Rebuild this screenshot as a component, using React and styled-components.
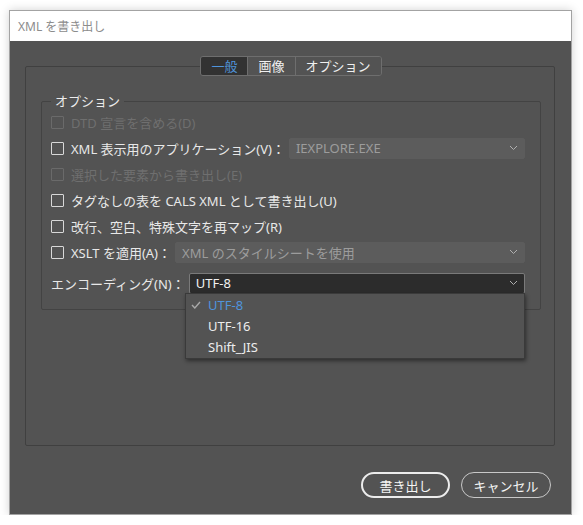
import React from 'react';
import styled, { createGlobalStyle } from 'styled-components';

const GlobalStyle = createGlobalStyle`
    body {
        margin: 0;
        background: #ffffff;
        font-family: "Noto Sans", "Noto Sans CJK JP", sans-serif;
    }
`;

const Window = styled.div`
    position: relative;
    margin: 10px 0 0 9px;
    width: 561px;
    height: 503px;
    border: 1px solid #a3a3a3;
    box-shadow: 0 0 9px rgba(0, 0, 0, 0.18);
    display: flex;
    flex-direction: column;
    background: #535353;
`;

const TitleBar = styled.div`
    height: 30px;
    background: #ffffff;
    display: flex;
    align-items: center;
    padding-left: 8px;
    font-size: 12px;
    color: #8c8c8c;
`;

const Body = styled.div`
    flex: 1;
    display: flex;
    flex-direction: column;
    padding: 15px 16px 16px 15px;
    color: #e6e6e6;
    font-size: 13px;
`;

const TabRow = styled.div`
    display: flex;
    justify-content: center;
    position: relative;
    z-index: 1;
    height: 20px;
    padding-left: 2px;
`;

const Tabs = styled.div`
    display: flex;
    border: 1px solid #6e6e6e;
    border-radius: 3px;
    overflow: hidden;
    background: #535353;
`;

const Tab = styled.div`
    padding: 0 10px;
    line-height: 18px;
    font-size: 13px;
    background: ${p => (p.$active ? '#323232' : '#535353')};
    color: ${p => (p.$active ? '#4f94dc' : '#f0f0f0')};
    border-left: ${p => (p.$first ? 'none' : '1px solid #6e6e6e')};
`;

const Frame = styled.div`
    margin-top: -10px;
    height: 380px;
    border: 1px solid #404040;
    border-radius: 2px;
    padding: 26px 13px 0 15px;
    box-sizing: border-box;
`;

const Group = styled.fieldset`
    margin: 0;
    border: 1px solid #434343;
    border-radius: 2px;
    padding: 0 15px 13px 9px;
    min-width: 0;
`;

const Legend = styled.legend`
    padding: 0 4px;
    font-size: 13px;
    color: #ececec;
    line-height: 16px;
`;

const Row = styled.div`
    display: flex;
    align-items: center;
    height: 26px;
    margin-top: ${p => p.$gap || 0}px;
    color: ${p => (p.$disabled ? '#6f6f6f' : '#e8e8e8')};
    white-space: nowrap;
    position: relative;
`;

const Check = styled.span`
    width: 11px;
    height: 11px;
    border: 1px solid ${p => (p.$disabled ? '#6a6a6a' : '#d8d8d8')};
    border-radius: 1px;
    margin-right: 7px;
    flex: none;
`;

const Label = styled.span`
    margin-right: 4px;
`;

const Select = styled.div`
    flex: 1;
    height: 21px;
    display: flex;
    align-items: center;
    justify-content: space-between;
    padding: 0 6px;
    border-radius: 2px;
    box-sizing: border-box;
    background: ${p => (p.$dark ? '#2c2c2c' : '#5c5c5c')};
    border: 1px solid ${p => (p.$dark ? '#7a7a7a' : '#5c5c5c')};
    color: ${p => (p.$dark ? '#f2f2f2' : '#9c9c9c')};
`;

const Menu = styled.div`
    position: absolute;
    top: 23px;
    left: 134px;
    right: 0;
    background: #535353;
    border: 1px solid #3a3a3a;
    box-shadow: 1px 2px 4px rgba(0, 0, 0, 0.45);
    padding: 0 0 1px;
`;

const MenuItem = styled.div`
    height: 21px;
    display: flex;
    align-items: center;
    padding-left: 22px;
    position: relative;
    color: ${p => (p.$selected ? '#4f94dc' : '#ededed')};
`;

const Tick = styled.svg`
    position: absolute;
    left: 5px;
    top: 7px;
`;

const Footer = styled.div`
    margin-top: auto;
    display: flex;
    justify-content: flex-end;
    gap: 11px;
    padding-right: 4px;
`;

const Button = styled.button`
    height: 26px;
    width: ${p => p.$w}px;
    border-radius: 13px;
    background: transparent;
    color: #f5f5f5;
    font-family: inherit;
    font-size: 13px;
    border: ${p => (p.$primary ? '2px solid #ececec' : '1px solid #c8c8c8')};
    padding: 0;
`;

const Chevron = () => (
    <svg width="9" height="6" viewBox="0 0 9 6">
        <path d="M1 1 L4.5 4.5 L8 1" fill="none" stroke="#b0b0b0" strokeWidth="1" />
    </svg>
);

export default function App() {
    return (
        <>
            <GlobalStyle />
            <Window>
                <TitleBar>XML を書き出し</TitleBar>
                <Body>
                    <TabRow>
                        <Tabs>
                            <Tab $active $first>一般</Tab>
                            <Tab>画像</Tab>
                            <Tab>オプション</Tab>
                        </Tabs>
                    </TabRow>
                    <Frame>
                        <Group>
                            <Legend>オプション</Legend>
                            <Row $disabled>
                                <Check $disabled />
                                <Label>DTD 宣言を含める(D)</Label>
                            </Row>
                            <Row>
                                <Check />
                                <Label>XML 表示用のアプリケーション(V)：</Label>
                                <Select>
                                    <span>IEXPLORE.EXE</span>
                                    <Chevron />
                                </Select>
                            </Row>
                            <Row $disabled>
                                <Check $disabled />
                                <Label>選択した要素から書き出し(E)</Label>
                            </Row>
                            <Row>
                                <Check />
                                <Label>タグなしの表を CALS XML として書き出し(U)</Label>
                            </Row>
                            <Row>
                                <Check />
                                <Label>改行、空白、特殊文字を再マップ(R)</Label>
                            </Row>
                            <Row>
                                <Check />
                                <Label>XSLT を適用(A)：</Label>
                                <Select>
                                    <span>XML のスタイルシートを使用</span>
                                    <Chevron />
                                </Select>
                            </Row>
                            <Row $gap={5}>
                                <Label>エンコーディング(N)：</Label>
                                <Select $dark>
                                    <span>UTF-8</span>
                                    <Chevron />
                                </Select>
                                <Menu>
                                    <MenuItem $selected>
                                        <Tick width="10" height="8" viewBox="0 0 10 8">
                                            <path d="M1 4 L3.8 7 L9 1" fill="none" stroke="#a8a8a8" strokeWidth="1.4" />
                                        </Tick>
                                        UTF-8
                                    </MenuItem>
                                    <MenuItem>UTF-16</MenuItem>
                                    <MenuItem>Shift_JIS</MenuItem>
                                </Menu>
                            </Row>
                        </Group>
                    </Frame>
                    <Footer>
                        <Button $primary $w={89}>書き出し</Button>
                        <Button $w={90}>キャンセル</Button>
                    </Footer>
                </Body>
            </Window>
        </>
    );
}
